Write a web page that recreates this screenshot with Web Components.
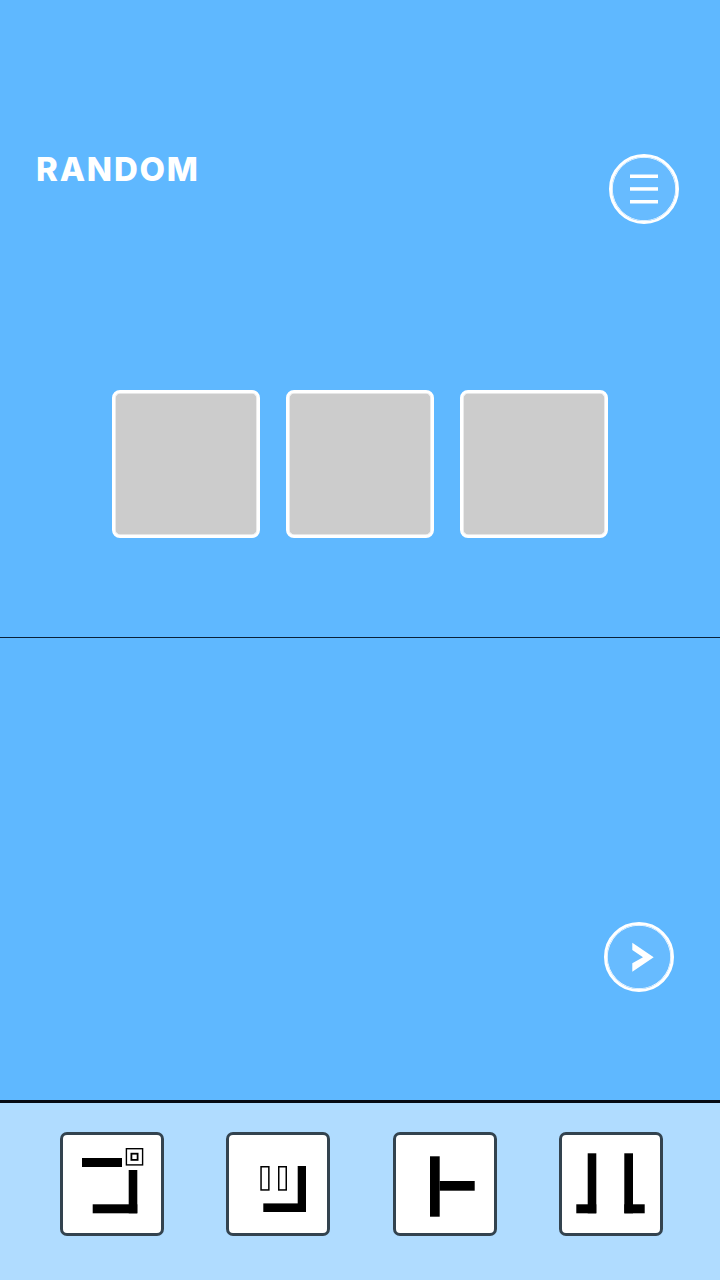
<!DOCTYPE html>
<html lang="en"><head><meta charset="utf-8"><title>Random</title>
<style>
html,body{margin:0;padding:0;width:720px;height:1280px;overflow:hidden;background:#5fb8ff}
</style></head><body>
<game-screen>
  <game-title slot="title">RANDOM</game-title>
  <round-button slot="menu" kind="menu"></round-button>
  <answer-tile slot="tiles"></answer-tile>
  <answer-tile slot="tiles"></answer-tile>
  <answer-tile slot="tiles"></answer-tile>
  <round-button slot="next" kind="next"></round-button>
  <piece-button slot="pieces" glyph="a"></piece-button>
  <piece-button slot="pieces" glyph="b"></piece-button>
  <piece-button slot="pieces" glyph="c"></piece-button>
  <piece-button slot="pieces" glyph="d"></piece-button>
</game-screen>
<script>
function def(name, html, init){
  customElements.define(name, class extends HTMLElement{
    constructor(){super();this.attachShadow({mode:'open'}).innerHTML=html;}
    connectedCallback(){ if(init) init(this); }
  });
}
def('game-screen',`<style>
:host{display:flex;flex-direction:column;width:720px;height:1280px;background:#5fb8ff}
.top{height:637px;box-sizing:border-box;display:flex;flex-direction:column}
.head{display:flex;justify-content:space-between;align-items:flex-start;padding:154px 41px 0 36px;height:70px}
.tiles{display:flex;gap:26px;justify-content:center;margin-top:166px}
.line{height:1px;background:#0a2038;flex:none}
.mid{height:462px;flex:none;display:flex;justify-content:flex-end;align-items:flex-start;padding:284px 46px 0 0;box-sizing:border-box}
.rule{height:3px;flex:none;background:#050a14}
.bar{flex:1;background:#b0dcff;display:grid;grid-template-columns:repeat(4,104px);column-gap:62.33px;padding:29px 0 0 60px;box-sizing:border-box;align-content:start}
</style>
<div class="top"><div class="head"><slot name="title"></slot><slot name="menu"></slot></div>
<div class="tiles"><slot name="tiles"></slot></div></div>
<div class="line"></div>
<div class="mid"><slot name="next"></slot></div>
<div class="rule"></div>
<div class="bar"><slot name="pieces"></slot></div>`);
def('game-title',`<style>
:host{display:block;font:800 33px/1 "Inter","Noto Sans",sans-serif;letter-spacing:1.8px;color:#fff;margin-top:-1px}
</style><slot></slot>`);
def('answer-tile',`<style>
:host{display:block;width:148px;height:148px;box-sizing:border-box;background:#ccc;border:3px solid #fff;border-radius:8px;box-shadow:inset 0 0 0 .6px #fff}
</style>`);
const icons={
 menu:'<rect x="21" y="20.5" width="28" height="3.5"/><rect x="21" y="33.2" width="28" height="3.5"/><rect x="21" y="46" width="28" height="3.5"/>',
 next:'<path d="M28.3 20.7 49.7 35.3 28.3 49.7V41.3L39 35.3 28.3 28Z"/>'
};
def('round-button',`<style>
:host{display:block;width:70px;height:70px;box-sizing:border-box;border:3px solid #fff;border-radius:50%;background:rgba(255,255,255,.05);box-shadow:inset 0 0 0 .7px #fff;position:relative}
svg{position:absolute;left:-3px;top:-3px;width:70px;height:70px;fill:#fff}
</style><svg viewBox="0 0 70 70"></svg>`,el=>{el.shadowRoot.querySelector('svg').innerHTML=icons[el.getAttribute('kind')]||'';});
const R=(x,y,w,h)=>`<rect x="${x}" y="${y}" width="${w}" height="${h}"/>`;
const O=(x,y,w,h,s)=>`<rect x="${x+s/2}" y="${y+s/2}" width="${w-s}" height="${h-s}" fill="#fff" stroke="#000" stroke-width="${s}"/>`;
const glyphs={
 a:R(22,26,40,9)+O(65.7,16,17.6,17.6,1.4)+O(70.5,20.8,8,8,1.8)+R(68.7,38,8.6,43.3)+R(32.7,72.3,44.6,9),
 b:O(34.3,34,9.3,24.7,1.5)+O(52,34,9,24.7,1.5)+R(71.7,34,8.3,46)+R(37.3,71.4,42.7,8.6),
 c:R(37,24.3,9.7,60.4)+R(46.7,49,35,9.7),
 d:R(28.7,21.3,8.6,60)+R(17.3,72.3,20,9)+R(65.3,21.3,8.7,60)+R(65.3,72.3,20.4,9)
};
def('piece-button',`<style>
:host{display:block;width:104px;height:104px;box-sizing:border-box;background:#fff;border:3px solid #33434f;border-radius:7px;position:relative}
svg{position:absolute;left:-3px;top:-3px;width:104px;height:104px;fill:#000}
</style><svg viewBox="0 0 104 104"></svg>`,el=>{el.shadowRoot.querySelector('svg').innerHTML=glyphs[el.getAttribute('glyph')]||'';});
</script>
</body></html>
